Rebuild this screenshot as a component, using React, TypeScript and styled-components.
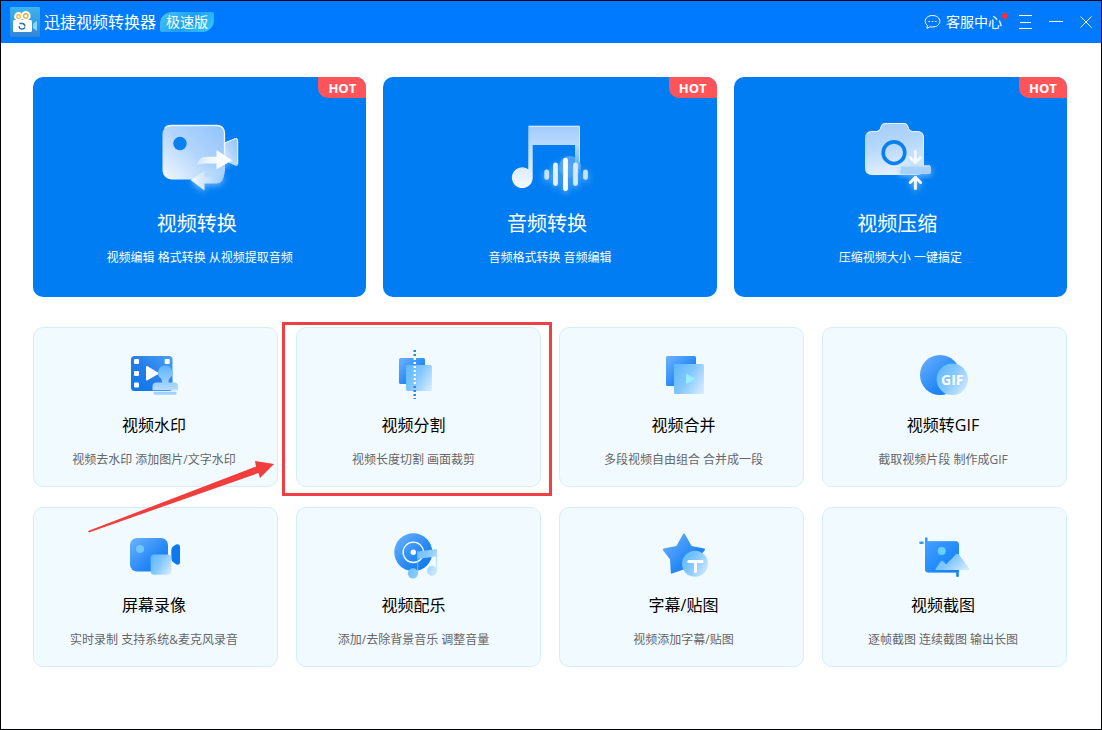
import React from "react";
import styled, { createGlobalStyle, css } from "styled-components";

const GlobalStyle = createGlobalStyle`
  *, *::before, *::after { box-sizing: border-box; }
  body {
    margin: 0;
    background: #fff;
    font-family: "Open Sans", "Noto Sans CJK SC", sans-serif;
  }
  button { font-family: inherit; cursor: pointer; }
  h1, h2, p { margin: 0; font-weight: 400; }
`;

const Window = styled.div`
  min-height: 100vh;
  border: 1px solid #04040c;
  background: #fff;
`;

const TitleBar = styled.header`
  display: flex;
  align-items: center;
  justify-content: space-between;
  height: 42px;
  padding: 0 9px;
  background: #007aff;
  color: #fff;
`;

const Brand = styled.div`
  display: flex;
  align-items: center;
  gap: 4px;
`;

const AppName = styled.h1`
  font-size: 16px;
  line-height: 24px;
`;

const Edition = styled.span`
  padding: 0 6px;
  border-radius: 12px 2px 12px 2px;
  background: linear-gradient(135deg, #4fc6f6, #1c9ff4 50%, #38cdfa);
  font-size: 14px;
  line-height: 20px;
`;

const Controls = styled.div`
  display: flex;
  align-items: center;
  gap: 17px;
`;

const BarButton = styled.button`
  display: flex;
  align-items: center;
  gap: 5px;
  padding: 0;
  border: 0;
  background: none;
  color: inherit;
  font-size: 14px;
  line-height: 20px;
`;

const SupportLabel = styled.span`
  position: relative;
  &::after {
    content: "";
    position: absolute;
    top: 1px;
    right: -6px;
    width: 6px;
    height: 6px;
    border-radius: 50%;
    background: #fa2c37;
  }
`;

const Main = styled.main`
  display: grid;
  gap: 30px;
  padding: 34px 34px 32px 32px;
`;

const HeroGrid = styled.section`
  display: grid;
  grid-template-columns: repeat(3, 1fr);
  gap: 17px;
`;

const ToolGrid = styled.section`
  position: relative;
  display: grid;
  grid-template-columns: repeat(4, 1fr);
  gap: 20px 18px;
`;

const cardBase = css`
  position: relative;
  display: flex;
  flex-direction: column;
  align-items: center;
  border-radius: 10px;
`;

const HeroCard = styled.button`
  ${cardBase}
  padding: 40px 0 29px;
  border: 0;
  background: #007df2;
  color: #fff;
`;

const HeroTitle = styled.h2`
  margin-top: 9px;
  padding-right: 6px;
  font-size: 20px;
  line-height: 28px;
`;

const Desc = styled.p`
  margin-top: 10px;
  font-size: 12px;
  line-height: 20px;
`;

const HotBadge = styled.span`
  position: absolute;
  top: 0;
  right: 0;
  width: 48px;
  padding-top: 1px;
  border-radius: 0 10px 0 10px;
  background: #ff5459;
  font-size: 13px;
  font-weight: 700;
  line-height: 20px;
  text-align: center;
`;

const ToolCard = styled.button`
  ${cardBase}
  padding: 19px 3px 16px 0;
  border: 1px solid #d6eef8;
  background: #f1faff;
  color: #666;
  &:nth-of-type(4n + 2) { padding-right: 10px; }
  &:nth-of-type(4n + 3) { padding: 19px 0 16px 4px; }
`;

const ToolTitle = styled.h2`
  margin: 10px 0 3px;
  color: #000;
  font-size: 16px;
  line-height: 24px;
`;

const Highlight = styled.span`
  position: absolute;
  inset: -6px -12px -10px -15px;
  border: 3px solid #ee4044;
  pointer-events: none;
`;

const Pointer = styled.svg`
  position: absolute;
  top: 130px;
  left: 54px;
  pointer-events: none;
`;

const Gradients = () => (
  <svg width="0" height="0" style={{ position: "absolute" }} aria-hidden="true">
    <defs>
      <linearGradient id="frost" x1="0.2" y1="0" x2="0.4" y2="1">
        <stop offset="0" stopColor="#a5ccfa" />
        <stop offset="0.45" stopColor="#b5d8fb" />
        <stop offset="1" stopColor="#e4f0fe" />
      </linearGradient>
      <linearGradient id="frostSide" x1="1" y1="0" x2="0" y2="1">
        <stop offset="0" stopColor="#8fc2fa" />
        <stop offset="0.5" stopColor="#b3d5fc" />
        <stop offset="1" stopColor="#f2f8ff" />
      </linearGradient>
      <linearGradient id="note" gradientUnits="userSpaceOnUse" x1="0" y1="8" x2="0" y2="72">
        <stop offset="0" stopColor="#a0cbfb" />
        <stop offset="1" stopColor="#f6faff" />
      </linearGradient>
      <linearGradient id="noteRight" gradientUnits="userSpaceOnUse" x1="0" y1="28" x2="0" y2="62">
        <stop offset="0" stopColor="#b4d7fc" />
        <stop offset="1" stopColor="#2f93f6" />
      </linearGradient>
      <linearGradient id="arrow" x1="1" y1="0" x2="0" y2="0">
        <stop offset="0" stopColor="#fff" />
        <stop offset="0.6" stopColor="#f2f8ff" />
        <stop offset="1" stopColor="#cfe5fe" />
      </linearGradient>
      <linearGradient id="arrowBack" x1="0" y1="0" x2="1" y2="0">
        <stop offset="0" stopColor="#f4f9ff" />
        <stop offset="1" stopColor="#9ccbfc" />
      </linearGradient>
      <linearGradient id="deep" x1="0" y1="0" x2="1" y2="1">
        <stop offset="0" stopColor="#6db3ff" />
        <stop offset="0.6" stopColor="#2688f5" />
        <stop offset="1" stopColor="#0a72ec" />
      </linearGradient>
      <linearGradient id="film" x1="1" y1="0" x2="0" y2="1">
        <stop offset="0" stopColor="#4b9ff8" />
        <stop offset="0.5" stopColor="#257fe8" />
        <stop offset="1" stopColor="#0877ef" />
      </linearGradient>
      <linearGradient id="glass" x1="0" y1="0.2" x2="1" y2="0.8">
        <stop offset="0" stopColor="#5fbaff" />
        <stop offset="0.45" stopColor="#83c7ff" />
        <stop offset="1" stopColor="#d2eaff" />
      </linearGradient>
      <linearGradient id="glassDown" x1="0" y1="0" x2="0" y2="1">
        <stop offset="0" stopColor="#5db4fd" />
        <stop offset="1" stopColor="#b5dcff" />
      </linearGradient>
      <filter id="glow" x="-50%" y="-50%" width="200%" height="200%">
        <feDropShadow dx="0" dy="2" stdDeviation="3" floodColor="#9fd0ff" floodOpacity="0.7" />
      </filter>
    </defs>
  </svg>
);

const HeroIcon = ({ children }: { children: React.ReactNode }) => (
  <svg width="100" height="84" viewBox="0 0 100 84" fill="none" aria-hidden="true">{children}</svg>
);

const ToolIcon = ({ children }: { children: React.ReactNode }) => (
  <svg width="60" height="56" viewBox="0 0 60 56" fill="none" aria-hidden="true">{children}</svg>
);

const ConvertIcon = () => (
  <HeroIcon>
    <path d="M73 26.500 85 21.400Q88 20.600 88 23.500V47Q88 49.600 85 48.600L73 43Z" fill="url(#frostSide)" />
    <path d="M75 25.800 85 21.700Q87.700 20.900 87.700 23.500V47" stroke="#eef6ff" />
    <rect x="12.500" y="8" width="62.500" height="54.500" rx="9" fill="url(#frostSide)" />
    <path d="M14.500 11.500Q16.500 8.600 21.500 8.500H66.500Q74 8.500 74.500 16V40" stroke="#eef6ff" strokeWidth="1.300" />
    <circle cx="30" cy="26.500" r="6.700" fill="#0a80ee" />
    <path d="M40.500 63 54.500 53.800V59.800H66.500Q71 59.500 74.500 55.500Q74 66.400 66.500 66.400H54.500V73.600Z" fill="url(#arrowBack)" filter="url(#glow)" />
    <path d="M47 48.500Q48 39.800 56.500 39.800H66.500V33L82 43.200 66.500 52.500V46.400H56.500Q50.500 46.400 47 48.500Z" fill="url(#arrow)" filter="url(#glow)" />
  </HeroIcon>
);

const AudioIcon = () => (
  <HeroIcon>
    <circle cx="70" cy="50" r="11" fill="url(#noteRight)" opacity="0.55" />
    <path d="M75 27H79.800V52H75Z" fill="url(#noteRight)" />
    <path d="M28.300 8.700H79.800V28H32.700V60.700A10.400 10.400 0 1 1 28.300 52.200Z" fill="url(#note)" />
    <path d="M79.500 45V9.300H29" stroke="#eaf4ff" strokeOpacity="0.8" />
    <g stroke="#e3f1ff" strokeWidth="4.800" strokeLinecap="round" filter="url(#glow)">
      <path d="M46.700 54.800V60.400" stroke="#c4e2ff" />
      <path d="M55.500 48V66.500" />
      <path d="M65.500 43.200V71.800" stroke="#fff" />
      <path d="M75.500 48V66.500" stroke="#d3e9ff" />
      <path d="M85.500 54.800V60.400" stroke="#c4e2ff" />
    </g>
  </HeroIcon>
);

const CompressIcon = () => (
  <HeroIcon>
    <path
      d="M22 14H26.500Q29.300 14 30.200 11L31 8.800Q32 6 35 6H54Q57 6 58 8.800L58.800 11Q59.700 14 62.500 14H67Q74 14 74 21V51Q74 58 67 58H22Q15 58 15 51V21Q15 14 22 14Z"
      fill="url(#frost)"
    />
    <path d="M17 17Q19 14.500 22 14.500H26.500Q29.500 14.500 30.500 11.500L31.500 9Q32.500 6.500 35 6.500H54Q56.800 6.500 57.600 9L58.500 11.500Q59.500 14.500 62.500 14.500H67Q73.500 14.500 73.500 21V36" stroke="#e6f2ff" />
    <circle cx="44" cy="35.700" r="10.800" stroke="#0a80ee" strokeWidth="3.600" />
    <rect x="49.500" y="48.500" width="31.500" height="8.500" rx="2" fill="#a7d1fc" filter="url(#glow)" />
    <path d="M50 55V50.500Q50 49 51.500 49H80" stroke="#dcecff" />
    <g stroke="#f2f8ff" strokeWidth="3" strokeLinecap="round" strokeLinejoin="round" filter="url(#glow)">
      <path d="M65.400 34.500V45M60.200 40.500 65.400 45.600 70.600 40.500" />
      <path d="M65.400 71.500V61M60.200 65.500 65.400 60.400 70.600 65.500" />
    </g>
  </HeroIcon>
);

const WatermarkIcon = () => (
  <ToolIcon>
    <rect x="7" y="9" width="41.500" height="35" rx="3.500" fill="url(#film)" />
    <g fill="#fff">
      <rect x="10" y="12" width="5" height="5" rx="1" />
      <rect x="10" y="24" width="5" height="5" rx="1" />
      <rect x="10" y="35.500" width="5" height="5" rx="1" />
      <rect x="40.700" y="12" width="5" height="5" rx="1" />
      <path d="M22 20Q22 18.500 23.500 19.300L34 25.400Q35.500 26.300 34 27.200L23.500 33.200Q22 34 22 32.500Z" />
    </g>
    <path d="M41.300 18.500A7.200 7.200 0 0 1 45.500 31.500Q44.500 32.500 44.500 35.500H50Q54 35.500 54 39.500V43.200H28.500V39.500Q28.500 35.500 32.500 35.500H38Q38 32.500 37 31.500A7.200 7.200 0 0 1 41.300 18.500Z" fill="url(#glassDown)" />
    <path d="M29.700 44.800H52.400V46.500Q52.400 47.700 51.200 47.700H30.900Q29.700 47.700 29.700 46.500Z" fill="#9fd2ff" />
  </ToolIcon>
);

const SplitIcon = () => (
  <ToolIcon>
    <rect x="15" y="11" width="26" height="26" rx="1.500" fill="url(#deep)" />
    <rect x="22" y="18" width="26" height="26" rx="1.500" fill="url(#glass)" />
    <path d="M30.700 3V52" stroke="#2b7fdc" strokeWidth="2.400" strokeDasharray="2 2" />
    <path d="M30.700 11V37" stroke="#fff" strokeWidth="2.400" strokeDasharray="2 2" />
  </ToolIcon>
);

const MergeIcon = () => (
  <ToolIcon>
    <rect x="12" y="9" width="30" height="30" rx="1.500" fill="url(#deep)" />
    <rect x="20" y="17" width="30" height="30" rx="1.500" fill="url(#glass)" />
    <path d="M32 28Q32 26.500 33.400 27.200L40.400 31Q41.600 31.800 40.400 32.600L33.400 36.400Q32 37 32 35.600Z" fill="#96edff" />
  </ToolIcon>
);

const GifIcon = () => (
  <ToolIcon>
    <circle cx="27" cy="28" r="20" fill="url(#deep)" />
    <circle cx="39.300" cy="32.300" r="15.700" fill="url(#glass)" />
    <text x="28" y="38" fill="#fff" fontSize="14" fontWeight="700">GIF</text>
  </ToolIcon>
);

const RecordIcon = () => (
  <ToolIcon>
    <rect x="6" y="11" width="38" height="33.500" rx="7" fill="url(#deep)" />
    <circle cx="16" cy="22" r="4" fill="#72c7ff" />
    <path d="M47.300 23Q47.300 21 49 19.500L52 17.500Q56 16 56 20.500V34.500Q56 39 52 37.300L49 35Q47.300 33.500 47.300 31.500Z" fill="#0a78f0" />
    <rect x="26.700" y="27.500" width="20.700" height="20.300" rx="3.500" fill="url(#glass)" />
  </ToolIcon>
);

const MusicIcon = () => (
  <ToolIcon>
    <circle cx="29.300" cy="25.300" r="19" fill="url(#deep)" />
    <circle cx="29.300" cy="25.300" r="10.200" stroke="#fff" strokeWidth="1.300" />
    <circle cx="29.300" cy="25.300" r="2.700" fill="#fff" />
    <path d="M33.300 24.500 53 22V43.500A5 5 0 1 1 52 40.800V29.500L34.200 31.700V46.500A5.200 5.200 0 1 1 33.300 43.400Z" fill="url(#glass)" />
  </ToolIcon>
);

const StarIcon = () => (
  <ToolIcon>
    <path d="M30 7.500 36.300 18.800Q37 20 38.500 20.300L50 22.600 42 32 43.500 45.300 30.500 41 17.800 45.600 17 32 9.800 22.600 21.500 20.300Q23 20 23.700 18.800Z" fill="url(#deep)" stroke="url(#deep)" strokeWidth="2" strokeLinejoin="round" />
    <circle cx="41" cy="36.700" r="13" fill="url(#glass)" />
    <path d="M34.800 34.500H48.200M41.500 34.500V44.500" stroke="#fff" strokeWidth="3" strokeLinecap="round" />
  </ToolIcon>
);

const SnapshotIcon = () => (
  <ToolIcon>
    <path d="M7.500 15.700H9.500M13.300 11.500V18" stroke="#349cf8" strokeWidth="2.600" strokeLinecap="round" />
    <path d="M44.500 43V48.800" stroke="#1580ee" strokeWidth="2.600" strokeLinecap="round" />
    <rect x="12" y="14.300" width="34" height="31.200" rx="3.500" fill="#1c8cff" />
    <rect x="12" y="14.300" width="34" height="31.200" rx="3.500" fill="url(#deep)" opacity="0.5" />
    <circle cx="28.700" cy="24" r="4" fill="#66d0ff" />
    <path d="M23.500 43Q22 43 22.800 41.500L27.500 34.500Q28.700 33 30 34.200L33.300 37.300 42.700 27.500Q44.300 26 45.800 27.500L56 41.200Q57 43 55.300 43Z" fill="url(#glass)" />
  </ToolIcon>
);

const LogoIcon = () => (
  <svg width="30" height="30" viewBox="0 0 30 30" fill="none" aria-hidden="true">
    <defs>
      <linearGradient id="logo" x1="0" y1="0" x2="0" y2="1">
        <stop offset="0" stopColor="#3fb4ea" />
        <stop offset="1" stopColor="#3184d8" />
      </linearGradient>
    </defs>
    <rect width="30" height="30" rx="1" fill="url(#logo)" />
    <rect x="3" y="13" width="19" height="12" rx="1.500" fill="#fff" />
    <path d="M23 17 27 13.500V24L23 21Z" fill="#7fdcf5" />
    <circle cx="8.500" cy="9.500" r="3.400" fill="#f1a824" stroke="#fff" strokeWidth="2" />
    <circle cx="15.800" cy="8.900" r="3.800" fill="#f1a824" stroke="#fff" strokeWidth="2" />
    <circle cx="8.500" cy="9.500" r="1.300" fill="#fff" />
    <circle cx="15.800" cy="8.900" r="1.500" fill="#fff" />
    <path d="M9.500 16.500H12.500Q15 17 14.800 19.500M15 20.500Q14 22 12 22Q9 22 9.200 19" stroke="#2b6fae" strokeWidth="1.400" />
  </svg>
);

const ChatIcon = () => (
  <svg width="17" height="16" viewBox="0 0 17 16" fill="none" stroke="currentColor" aria-hidden="true">
    <path d="M8.500 1.500C12.700 1.500 15.800 4 15.800 7.300S12.700 13 8.500 13Q7 13 5.800 12.700L3 14.500 3.300 11.400Q1.200 9.800 1.200 7.300C1.200 4 4.300 1.500 8.500 1.500Z" />
    <path d="M4.500 7.500H6M7.800 7.500H9.300M11 7.500H12.500" />
  </svg>
);

const heroes = [
  { icon: <ConvertIcon />, title: "视频转换", desc: "视频编辑 格式转换 从视频提取音频" },
  { icon: <AudioIcon />, title: "音频转换", desc: "音频格式转换 音频编辑" },
  { icon: <CompressIcon />, title: "视频压缩", desc: "压缩视频大小 一键搞定" },
];

const tools = [
  { icon: <WatermarkIcon />, title: "视频水印", desc: "视频去水印 添加图片/文字水印" },
  { icon: <SplitIcon />, title: "视频分割", desc: "视频长度切割 画面裁剪", marked: true },
  { icon: <MergeIcon />, title: "视频合并", desc: "多段视频自由组合 合并成一段" },
  { icon: <GifIcon />, title: "视频转GIF", desc: "截取视频片段 制作成GIF" },
  { icon: <RecordIcon />, title: "屏幕录像", desc: "实时录制 支持系统&麦克风录音" },
  { icon: <MusicIcon />, title: "视频配乐", desc: "添加/去除背景音乐 调整音量" },
  { icon: <StarIcon />, title: "字幕/贴图", desc: "视频添加字幕/贴图" },
  { icon: <SnapshotIcon />, title: "视频截图", desc: "逐帧截图 连续截图 输出长图" },
];

export default function App() {
  return (
    <Window lang="zh-CN">
      <GlobalStyle />
      <Gradients />
      <TitleBar>
        <Brand>
          <LogoIcon />
          <AppName>迅捷视频转换器</AppName>
          <Edition>极速版</Edition>
        </Brand>
        <Controls>
          <BarButton>
            <ChatIcon />
            <SupportLabel>客服中心</SupportLabel>
          </BarButton>
          <BarButton aria-label="菜单">
            <svg width="13" height="14" viewBox="0 0 13 14" stroke="currentColor" aria-hidden="true">
              <path d="M0 .5H13M1 7.500H12M0 13.500H13" />
            </svg>
          </BarButton>
          <BarButton aria-label="最小化">
            <svg width="14" height="14" viewBox="0 0 14 14" stroke="currentColor" aria-hidden="true">
              <path d="M0 6.500H14" />
            </svg>
          </BarButton>
          <BarButton aria-label="关闭">
            <svg width="12" height="12" viewBox="0 0 12 12" stroke="currentColor" aria-hidden="true">
              <path d="M.5 .5 11.500 11.500M11.500 .5 .5 11.500" />
            </svg>
          </BarButton>
        </Controls>
      </TitleBar>
      <Main>
        <HeroGrid>
          {heroes.map((h) => (
            <HeroCard key={h.title}>
              <HotBadge>HOT</HotBadge>
              {h.icon}
              <HeroTitle>{h.title}</HeroTitle>
              <Desc>{h.desc}</Desc>
            </HeroCard>
          ))}
        </HeroGrid>
        <ToolGrid>
          {tools.map((t) => (
            <ToolCard key={t.title}>
              {t.icon}
              <ToolTitle>{t.title}</ToolTitle>
              <Desc>{t.desc}</Desc>
              {t.marked && <Highlight />}
            </ToolCard>
          ))}
          <Pointer width="190" height="80" viewBox="0 0 190 80" aria-hidden="true">
            <path d="M1 74 169 9.500 168 4 187 7 173 21 171.500 16 2 75.500Z" fill="#f03e3c" />
          </Pointer>
        </ToolGrid>
      </Main>
    </Window>
  );
}
